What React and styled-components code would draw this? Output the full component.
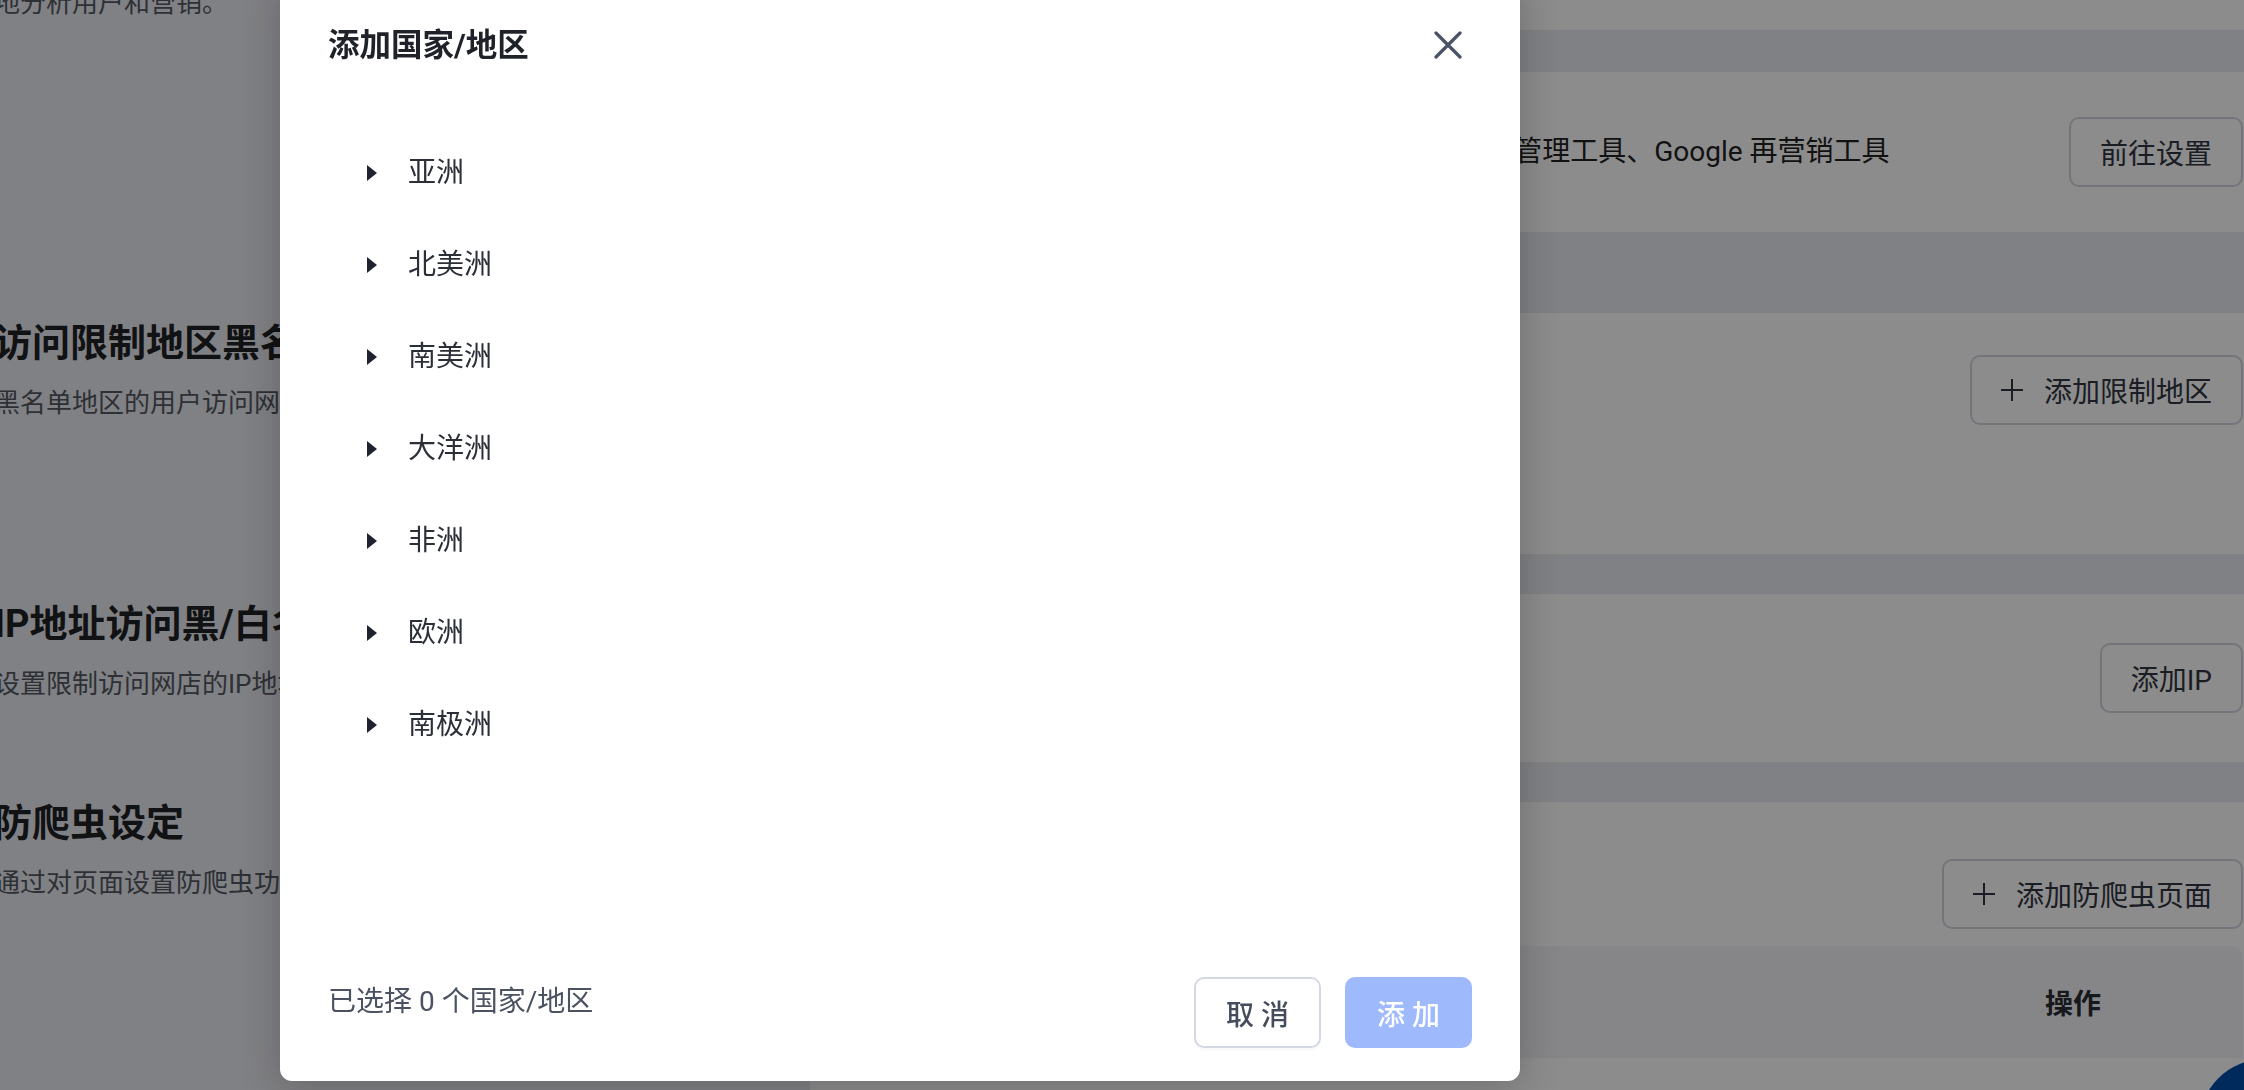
import React from "react";
import styled, { createGlobalStyle } from "styled-components";

const GlobalStyle = createGlobalStyle`
  html, body {
    margin: 0;
    padding: 0;
    overflow: hidden;
    background: #e9ebf0;
  }
  body {
    font-family: Roboto, "Noto Sans CJK SC", sans-serif;
    color: #222;
  }
  * {
    box-sizing: border-box;
  }
`;

const continents = ["亚洲", "北美洲", "南美洲", "大洋洲", "非洲", "欧洲", "南极洲"];

function PlusIcon() {
  return (
    <svg width="22" height="22" viewBox="0 0 22 22">
      <path d="M11 0V22M0 11H22" stroke="currentColor" strokeWidth="2" />
    </svg>
  );
}

function CloseIcon() {
  return (
    <svg width="28" height="28" viewBox="0 0 28 28">
      <path
        d="M2 2L26 26M26 2L2 26"
        stroke="#4a5366"
        strokeWidth="3.2"
        strokeLinecap="round"
      />
    </svg>
  );
}

function Caret() {
  return (
    <svg width="10" height="16" viewBox="0 0 10 16">
      <path d="M0 0L10 8L0 16Z" fill="#1f2330" />
    </svg>
  );
}

function App() {
  return (
    <>
      <GlobalStyle />
      <Page>
        {/* 第三方工具 */}
        <Section $extra={41}>
          <Intro>
            <Heading>第三方统计与营销工具</Heading>
            <Desc>
              通过安装第三方追踪工具，帮助您更好
              <br />
              地分析用户和营销。
            </Desc>
          </Intro>
          <CardStack>
            <Card $h={157} />
            <Card $h={160} $row>
              <CardText>
                支持 Google Analytics、Facebook 像素、Google 标签管理工具、Google 再营销工具
              </CardText>
              <GhostButton>前往设置</GhostButton>
            </Card>
          </CardStack>
        </Section>

        <Section>
          <Intro>
            <Heading>访问限制地区黑名单</Heading>
            <Desc>黑名单地区的用户访问网店时将被拒绝</Desc>
          </Intro>
          <Card $h={241} $pad="42px 40px">
            <CardBar>
              <GhostButton>
                <PlusIcon />
                添加限制地区
              </GhostButton>
            </CardBar>
          </Card>
        </Section>

        <Section>
          <Intro>
            <Heading>IP地址访问黑/白名单</Heading>
            <Desc>设置限制访问网店的IP地址</Desc>
          </Intro>
          <Card $h={168} $row>
            <CardText />
            <GhostButton>添加IP</GhostButton>
          </Card>
        </Section>

        <Section>
          <Intro $offset={-3}>
            <Heading>防爬虫设定</Heading>
            <Desc>通过对页面设置防爬虫功能保护网店数据</Desc>
          </Intro>
          <Card $h={400} $pad="57px 40px 0">
            <CardBar>
              <GhostButton>
                <PlusIcon />
                添加防爬虫页面
              </GhostButton>
            </CardBar>
            <TableHead>
              <Th>页面</Th>
              <Th>操作</Th>
            </TableHead>
          </Card>
        </Section>
      </Page>
      <FloatButton />

      <Overlay />
      <Modal>
        <ModalHeader>
          <Title>添加国家/地区</Title>
          <CloseButton>
            <CloseIcon />
          </CloseButton>
        </ModalHeader>
        <TreeList>
          {continents.map((name) => (
            <TreeRow key={name}>
              <CaretBox>
                <Caret />
              </CaretBox>
              <TreeLabel>{name}</TreeLabel>
            </TreeRow>
          ))}
        </TreeList>
        <ModalFooter>
          <Count>已选择 0 个国家/地区</Count>
          <Actions>
            <FooterButton>取 消</FooterButton>
            <FooterButton $primary>添 加</FooterButton>
          </Actions>
        </ModalFooter>
      </Modal>
    </>
  );
}

export default App;

const Page = styled.div`
  display: flex;
  flex-direction: column;
  gap: 40px;
  width: 2289px;
  margin: -127px 0 0 -6px;
`;

const Section = styled.section`
  display: grid;
  grid-template-columns: 776px 1fr;
  column-gap: 40px;
  align-items: start;
  margin-bottom: ${(p) => p.$extra || 0}px;
`;

const Intro = styled.div`
  margin-top: ${(p) => (p.$offset ?? 6)}px;
  white-space: nowrap;
`;

const Heading = styled.h2`
  margin: 0;
  font-size: 38px;
  line-height: 48px;
  font-weight: 700;
  color: #1f2126;
`;

const Desc = styled.p`
  margin: 16px 0 0;
  font-size: 26px;
  line-height: 40px;
  color: #545862;
`;

const CardStack = styled.div`
  display: flex;
  flex-direction: column;
  gap: 42px;
`;

const Card = styled.div`
  background: #fff;
  border-radius: 12px;
  min-height: ${(p) => p.$h}px;
  padding: ${(p) => p.$pad || "0 40px"};
  display: ${(p) => (p.$row ? "flex" : "block")};
  align-items: center;
  justify-content: space-between;
`;

const CardText = styled.div`
  font-size: 28px;
  line-height: 40px;
  color: #222;
  white-space: nowrap;
`;

const CardBar = styled.div`
  display: flex;
  justify-content: flex-end;
`;

const GhostButton = styled.button`
  display: inline-flex;
  align-items: center;
  gap: 21px;
  height: 70px;
  padding: 0 29px;
  border: 2px solid #d2d6df;
  border-radius: 10px;
  background: #fff;
  font-family: inherit;
  font-size: 28px;
  color: #303540;
  white-space: nowrap;
`;

const TableHead = styled.div`
  display: grid;
  grid-template-columns: 1fr 198px;
  align-items: center;
  height: 112px;
  margin-top: 17px;
  background: #f4f5f9;
  border-radius: 12px 12px 0 0;
`;

const Th = styled.div`
  font-size: 28px;
  font-weight: 700;
  color: #2a2d33;
`;

const FloatButton = styled.div`
  position: fixed;
  left: 2199px;
  top: 1059px;
  width: 132px;
  height: 132px;
  border-radius: 50%;
  background: #004ca8;
`;

const Overlay = styled.div`
  position: fixed;
  inset: 0;
  background: rgba(0, 0, 0, 0.45);
`;

const Modal = styled.div`
  position: fixed;
  left: 280px;
  top: -20px;
  bottom: 9px;
  width: 1240px;
  display: flex;
  flex-direction: column;
  background: #fff;
  border-radius: 12px;
  box-shadow: 0 6px 40px rgba(0, 0, 0, 0.22);
`;

const ModalHeader = styled.div`
  display: flex;
  align-items: flex-start;
  justify-content: space-between;
  padding: 44px 48px 0;
`;

const Title = styled.h3`
  margin: 0;
  font-size: 31.5px;
  line-height: 44px;
  font-weight: 700;
  color: #1f2329;
`;

const CloseButton = styled.button`
  width: 48px;
  height: 44px;
  display: flex;
  align-items: center;
  justify-content: center;
  padding: 0 0 2px;
  border: none;
  background: transparent;
`;

const TreeList = styled.ul`
  list-style: none;
  margin: 59px 0 0;
  padding: 0 0 0 87px;
`;

const TreeRow = styled.li`
  display: flex;
  align-items: center;
  height: 92px;
`;

const CaretBox = styled.span`
  display: flex;
  align-items: center;
  width: 41px;
`;

const TreeLabel = styled.span`
  font-size: 28px;
  line-height: 40px;
  color: #2b2f38;
`;

const ModalFooter = styled.div`
  margin-top: auto;
  display: flex;
  justify-content: space-between;
  align-items: flex-start;
  padding: 0 48px 33px;
`;

const Count = styled.div`
  font-size: 28px;
  line-height: 46px;
  padding-top: 2px;
  color: #4b5262;
`;

const Actions = styled.div`
  display: flex;
  gap: 24px;
`;

const FooterButton = styled.button`
  height: 71px;
  padding: 0 30px;
  border-radius: 10px;
  font-family: inherit;
  font-size: 28px;
  font-weight: 500;
  border: 2px solid ${(p) => (p.$primary ? "#9fb9fd" : "#d3d8e2")};
  background: ${(p) => (p.$primary ? "#9fb9fd" : "#fff")};
  color: ${(p) => (p.$primary ? "#fff" : "#454c5c")};
  box-shadow: ${(p) => (p.$primary ? "none" : "0 3px 0 rgba(0, 0, 0, 0.02)")};
`;
